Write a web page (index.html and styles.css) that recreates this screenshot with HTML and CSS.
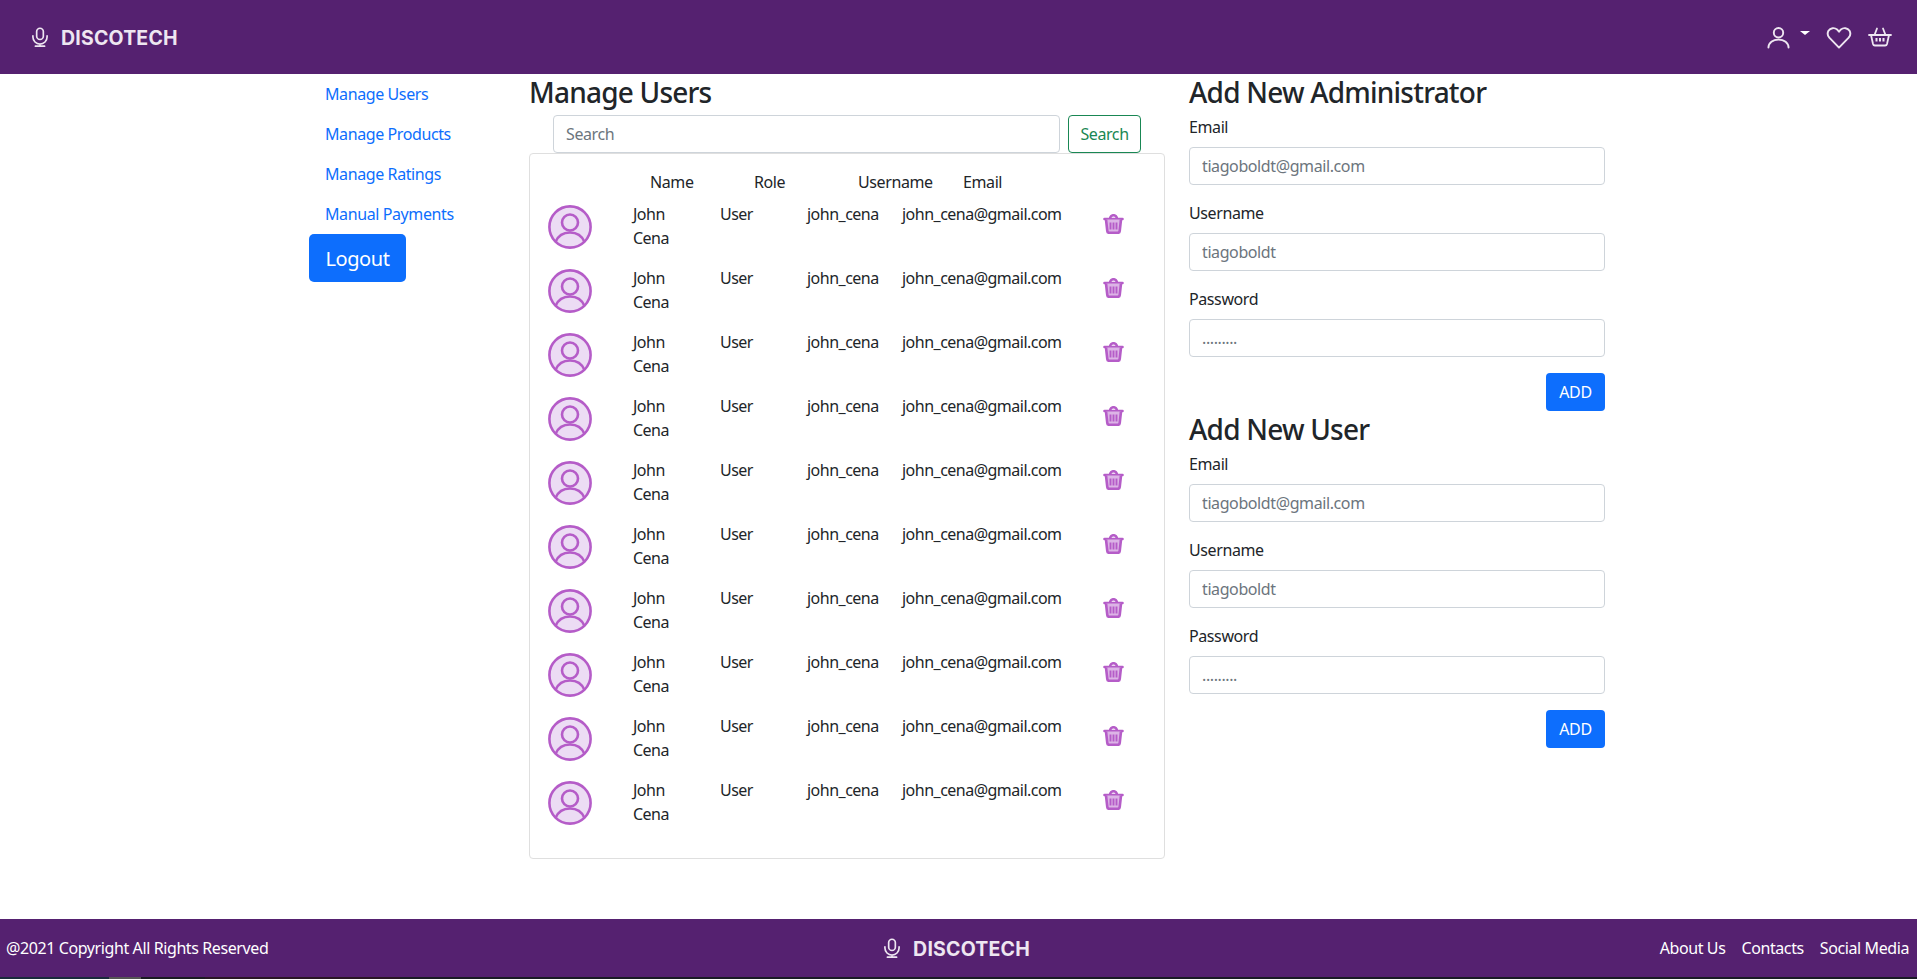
FILE: index.html
```html
<!DOCTYPE html>
<html lang="en">
<head>
<meta charset="utf-8">
<title>Discotech - Manage Users</title>
<link rel="stylesheet" href="styles.css">
</head>
<body>
<svg class="defs" aria-hidden="true">
  <symbol id="mic" viewBox="0 0 24 24"><rect x="8" y="1.5" width="8" height="13.5" rx="4" fill="none" stroke="currentColor" stroke-width="2"/><path d="M3.5 10.5v1.5a8.5 8.5 0 0 0 17 0v-1.5M12 20.5v2.5M6.5 23h11" fill="none" stroke="currentColor" stroke-width="2" stroke-linecap="round"/></symbol>
  <symbol id="user" viewBox="0 0 24 24"><circle cx="12" cy="7" r="4.9" fill="none" stroke="currentColor" stroke-width="2"/><path d="M1.5 22.5a10.5 8.500 0 0 1 21 0" fill="none" stroke="currentColor" stroke-width="2" stroke-linecap="round"/></symbol>
  <symbol id="heart" viewBox="0 0 26 24"><path d="M13 22.5 2.900 12.200A6.400 6.400 0 0 1 2 5 6.200 6.200 0 0 1 11 3.600L13 6l2-2.400A6.200 6.200 0 0 1 24 5a6.400 6.400 0 0 1-.9 7.200Z" fill="none" stroke="currentColor" stroke-width="2" stroke-linejoin="round"/></symbol>
  <symbol id="basket" viewBox="0 0 24 20"><path d="M1 8h22M3 8l2 9a2 2 0 0 0 2 1.500h10a2 2 0 0 0 2-1.500l2-9M6.500 8 9 1.500M17.500 8 15 1.500" fill="none" stroke="currentColor" stroke-width="1.800" stroke-linecap="round" stroke-linejoin="round"/><path d="M8.500 11v3.500M12 11v3.500M15.500 11v3.500" fill="none" stroke="currentColor" stroke-width="2"/></symbol>
  <symbol id="avatar" viewBox="0 0 44 44"><circle cx="22" cy="22" r="20.600" fill="#ecdcf4" stroke="#b55cc8" stroke-width="2.600"/><circle cx="22" cy="17.500" r="8" fill="none" stroke="#b55cc8" stroke-width="2.600"/><path d="M7.500 37c2.500-6 8-9.500 14.500-9.500S34 31 36.500 37" fill="none" stroke="#b55cc8" stroke-width="2.600"/></symbol>
  <symbol id="trash" viewBox="0 0 21 20"><path d="M1.500 5h18M7 5c0-5 7-5 7 0" fill="none" stroke="#b55cc8" stroke-width="2.600" stroke-linecap="round"/><path d="M3 5.500 4.300 17a2 2 0 0 0 2 1.800h8.400a2 2 0 0 0 2-1.800L18 5.500" fill="#dcb4e6" stroke="#b55cc8" stroke-width="2.600"/><path d="M7.500 8.500v7M10.500 8.500v7M13.500 8.500v7" fill="none" stroke="#b55cc8" stroke-width="1.900"/></symbol>
</svg>

<div class="page">
  <header class="topbar">
    <a class="brand" href="#"><svg class="brand-icon"><use href="#mic"/></svg><span class="brand-name">DISCOTECH</span></a>
    <nav class="top-icons">
      <a class="user-menu" href="#"><svg class="icon-user"><use href="#user"/></svg><span class="caret"></span></a>
      <a href="#"><svg class="icon-heart"><use href="#heart"/></svg></a>
      <a href="#"><svg class="icon-basket"><use href="#basket"/></svg></a>
    </nav>
  </header>

  <main class="container">
    <aside class="side">
      <a class="side-link" href="#">Manage Users</a>
      <a class="side-link" href="#">Manage Products</a>
      <a class="side-link" href="#">Manage Ratings</a>
      <a class="side-link" href="#">Manual Payments</a>
      <button class="btn btn-logout" type="button">Logout</button>
    </aside>

    <section class="users">
      <h3 class="title">Manage Users</h3>
      <form class="search">
        <input class="field" type="search" placeholder="Search">
        <button class="btn btn-search" type="button">Search</button>
      </form>
      <div class="card">
        <div class="table-head"><span>Name</span><span>Role</span><span>Username</span><span>Email</span></div>
        <div class="user-row"><svg class="avatar"><use href="#avatar"/></svg><span class="user-name">John Cena</span><span>User</span><span>john_cena</span><span>john_cena@gmail.com</span><svg class="trash"><use href="#trash"/></svg></div>
        <div class="user-row"><svg class="avatar"><use href="#avatar"/></svg><span class="user-name">John Cena</span><span>User</span><span>john_cena</span><span>john_cena@gmail.com</span><svg class="trash"><use href="#trash"/></svg></div>
        <div class="user-row"><svg class="avatar"><use href="#avatar"/></svg><span class="user-name">John Cena</span><span>User</span><span>john_cena</span><span>john_cena@gmail.com</span><svg class="trash"><use href="#trash"/></svg></div>
        <div class="user-row"><svg class="avatar"><use href="#avatar"/></svg><span class="user-name">John Cena</span><span>User</span><span>john_cena</span><span>john_cena@gmail.com</span><svg class="trash"><use href="#trash"/></svg></div>
        <div class="user-row"><svg class="avatar"><use href="#avatar"/></svg><span class="user-name">John Cena</span><span>User</span><span>john_cena</span><span>john_cena@gmail.com</span><svg class="trash"><use href="#trash"/></svg></div>
        <div class="user-row"><svg class="avatar"><use href="#avatar"/></svg><span class="user-name">John Cena</span><span>User</span><span>john_cena</span><span>john_cena@gmail.com</span><svg class="trash"><use href="#trash"/></svg></div>
        <div class="user-row"><svg class="avatar"><use href="#avatar"/></svg><span class="user-name">John Cena</span><span>User</span><span>john_cena</span><span>john_cena@gmail.com</span><svg class="trash"><use href="#trash"/></svg></div>
        <div class="user-row"><svg class="avatar"><use href="#avatar"/></svg><span class="user-name">John Cena</span><span>User</span><span>john_cena</span><span>john_cena@gmail.com</span><svg class="trash"><use href="#trash"/></svg></div>
        <div class="user-row"><svg class="avatar"><use href="#avatar"/></svg><span class="user-name">John Cena</span><span>User</span><span>john_cena</span><span>john_cena@gmail.com</span><svg class="trash"><use href="#trash"/></svg></div>
        <div class="user-row"><svg class="avatar"><use href="#avatar"/></svg><span class="user-name">John Cena</span><span>User</span><span>john_cena</span><span>john_cena@gmail.com</span><svg class="trash"><use href="#trash"/></svg></div>
      </div>
    </section>

    <section class="forms">
      <h3 class="title">Add New Administrator</h3>
      <form class="add-form">
        <label class="lbl">Email</label>
        <input class="field" type="text" placeholder="tiagoboldt@gmail.com">
        <label class="lbl">Username</label>
        <input class="field" type="text" placeholder="tiagoboldt">
        <label class="lbl">Password</label>
        <input class="field" type="text" placeholder=".........">
        <button class="btn btn-add" type="button">ADD</button>
      </form>
      <h3 class="title">Add New User</h3>
      <form class="add-form">
        <label class="lbl">Email</label>
        <input class="field" type="text" placeholder="tiagoboldt@gmail.com">
        <label class="lbl">Username</label>
        <input class="field" type="text" placeholder="tiagoboldt">
        <label class="lbl">Password</label>
        <input class="field" type="text" placeholder=".........">
        <button class="btn btn-add" type="button">ADD</button>
      </form>
    </section>
  </main>

  <footer class="bottombar">
    <span class="copy">@2021 Copyright All Rights Reserved</span>
    <a class="brand brand-footer" href="#"><svg class="brand-icon"><use href="#mic"/></svg><span class="brand-name">DISCOTECH</span></a>
    <nav class="foot-links">
      <a href="#">About Us</a>
      <a href="#">Contacts</a>
      <a href="#">Social Media</a>
    </nav>
  </footer>
  <div class="strip"></div>
</div>
</body>
</html>
```

FILE: styles.css
```css
* { box-sizing: border-box; }
html, body { height: 100%; }
body {
  margin: 0;
  font-family: "Noto Sans", "Open Sans", sans-serif;
  font-size: 16px;
  line-height: 24px;
  letter-spacing: -0.025em;
  color: #212529;
  background: #fff;
}
a { text-decoration: none; color: inherit; }
.defs { position: absolute; width: 0; height: 0; }

.page { height: 979px; display: flex; flex-direction: column; overflow: hidden; }

.topbar {
  flex: 0 0 74px;
  background: #552170;
  display: flex;
  align-items: center;
  justify-content: space-between;
  padding: 0 25px 0 30px;
  color: #eee6f1;
}
.brand { display: flex; align-items: center; gap: 11px; }
.brand-icon { width: 20px; height: 22px; }
.brand-name {
  font-family: Inter, sans-serif;
  font-weight: 700;
  font-size: 19.500px;
  letter-spacing: 0.2px;
  padding-top: 1px;
}
.top-icons { display: flex; align-items: center; gap: 16px; }
.top-icons a { display: flex; align-items: center; }
.user-menu { gap: 10px; }
.icon-user { width: 23px; height: 23px; }
.icon-heart { width: 26px; height: 23px; }
.icon-basket { width: 24px; height: 20px; }
.caret {
  width: 0; height: 0;
  border-left: 5px solid transparent;
  border-right: 5px solid transparent;
  border-top: 4px solid #fff;
  margin-top: -8px;
}

.container {
  flex: 1;
  width: 1320px;
  margin-left: 297px;
  display: grid;
  grid-template-columns: 220px 660px 440px;
  align-items: start;
}
.side { padding: 0 12px; display: flex; flex-direction: column; align-items: flex-start; }
.side-link { color: #0d6efd; padding: 8px 16px; height: 40px; white-space: nowrap; }
.btn {
  font: inherit;
  letter-spacing: inherit;
  border: 1px solid transparent;
  border-radius: 4px;
  background: #0d6efd;
  color: #fff;
  height: 38px;
  padding: 0 12px;
}
.btn-logout { font-size: 20px; height: 48px; width: 97px; border-radius: 5px; padding: 1px 0 0; }
.btn-search { background: #fff; border-color: #198754; color: #198754; flex: 0 0 73px; padding: 0; }
.btn-add { width: 59px; padding: 0; align-self: flex-end; display: block; margin-top: 16px; }

.users, .forms { padding: 0 12px; }
.title {
  margin: 0 0 7px;
  padding-top: 3px;
  font-size: 28px;
  line-height: 31px;
  font-weight: 500;
  letter-spacing: -0.028em;
}

.field {
  display: block;
  width: 100%;
  height: 38px;
  padding: 0 12px;
  font: inherit;
  letter-spacing: inherit;
  color: #212529;
  border: 1px solid #ced4da;
  border-radius: 4px;
  background: #fff;
}
.field::placeholder { color: #6c757d; opacity: 1; }

.search { display: flex; gap: 8px; padding: 0 24px 0 24px; }
.search .field { flex: 1; }

.card {
  border: 1px solid #dfdfdf;
  border-radius: 4px;
  padding: 16px 0 16px;
  height: 706px;
}
.table-head {
  display: grid;
  grid-template-columns: 104px 104px 105px 104px;
  padding-left: 120px;
  margin-bottom: 8px;
}
.user-row {
  display: grid;
  grid-template-columns: 85px 87px 87px 95px 201px 21px;
  padding-left: 18px;
  height: 48px;
  margin-bottom: 16px;
  letter-spacing: -0.032em;
}
.user-name { padding-right: 30px; }
.avatar { width: 44px; height: 44px; margin-top: 3px; }
.trash { width: 21px; height: 20px; margin-top: 12px; }

.add-form { display: flex; flex-direction: column; }
.lbl { margin-bottom: 8px; }
.field + .lbl { margin-top: 16px; }

.bottombar {
  flex: 0 0 58px;
  background: #552170;
  color: #fff;
  display: grid;
  grid-template-columns: 1fr auto 1fr;
  align-items: center;
  padding: 0 8px 0 6px;
}
.brand-footer { color: #eee6f1; margin-left: -3px; }
.foot-links { display: flex; justify-content: flex-end; gap: 16px; }
.strip {
  flex: 0 0 2px;
  background: linear-gradient(to right, #1a2a3c 0 109px, #555 109px 141px, #1b1b22 141px 205px, #2a1626 205px 400px, #1b1b26 400px);
}
```
